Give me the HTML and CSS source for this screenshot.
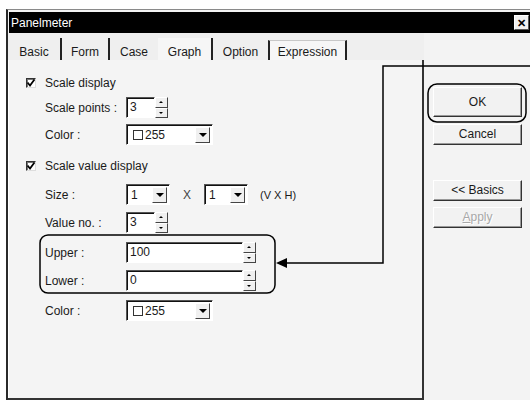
FILE: index.html
```html
<!DOCTYPE html>
<html lang="en">
<head>
  <meta charset="UTF-8" />
  <title>Panelmeter</title>
  <link rel="stylesheet" href="styles.css">
</head>
<body>
  <div class="page">
    <div class="window">
      <div class="titlebar">
        <span class="title">Panelmeter</span>
        <span class="close">&#x2715;</span>
      </div>

      <div class="client">
        <div class="main">
          <div class="tabs">
            <span class="tab t-basic sep">Basic</span>
            <span class="tab t-form sep">Form</span>
            <span class="tab t-case">Case</span>
            <span class="tab t-graph sep active">Graph</span>
            <span class="tab t-option">Option</span>
            <span class="tab t-expr boxed">Expression</span>
          </div>

          <div class="panel">
            <div class="row check r1">
              <span class="checkbox"><svg width="8" height="8" viewBox="0 0 8 8"><polyline points="0.5,3.5 3,6.5 7.5,0.5" /></svg></span>
              <span>Scale display</span>
            </div>
            <div class="row r2">
              <span class="label">Scale points :</span>
              <span class="spin"><span class="field num">3</span><span class="spinbtns"><i class="up"></i><i class="down"></i></span></span>
            </div>
            <div class="row r3">
              <span class="label">Color :</span>
              <span class="combo color"><span class="swatch"></span>255<span class="drop"><i></i></span></span>
            </div>

            <div class="row check r4">
              <span class="checkbox"><svg width="8" height="8" viewBox="0 0 8 8"><polyline points="0.5,3.5 3,6.5 7.5,0.5" /></svg></span>
              <span>Scale value display</span>
            </div>
            <div class="row r5">
              <span class="label">Size :</span>
              <span class="combo small">1<span class="drop"><i></i></span></span>
              <span class="times">X</span>
              <span class="combo small">1<span class="drop"><i></i></span></span>
              <span class="hint">(V X H)</span>
            </div>
            <div class="row r6">
              <span class="label">Value no. :</span>
              <span class="spin"><span class="field num">3</span><span class="spinbtns"><i class="up"></i><i class="down"></i></span></span>
            </div>
            <div class="row r7">
              <span class="label">Upper :</span>
              <span class="spin"><span class="field wide">100</span><span class="spinbtns"><i class="up"></i><i class="down"></i></span></span>
            </div>
            <div class="row r8">
              <span class="label">Lower :</span>
              <span class="spin"><span class="field wide">0</span><span class="spinbtns"><i class="up"></i><i class="down"></i></span></span>
            </div>
            <div class="row r9">
              <span class="label">Color :</span>
              <span class="combo color"><span class="swatch"></span>255<span class="drop"><i></i></span></span>
            </div>
          </div>
        </div>

        <div class="side">
          <span class="btn ok">OK</span>
          <span class="btn cancel">Cancel</span>
          <span class="btn basics">&lt;&lt; Basics</span>
          <span class="btn apply"><u>A</u>pply</span>
        </div>
      </div>
    </div>

    <!-- annotation drawn over the dialog -->
    <svg class="notes" width="530" height="403" viewBox="0 0 530 403">
      <rect x="40" y="235" width="235" height="58" rx="8" />
      <rect x="428" y="84" width="98" height="38" rx="9" />
      <polyline points="530,66 383,66 383,263 284,263" />
      <polygon class="head" points="276,263 287,258 287,268" />
    </svg>
  </div>
</body>
</html>
```

FILE: styles.css
```css
* {
  box-sizing: border-box;
}

body {
  margin: 0;
  background: #fff;
  font-family: "Liberation Sans", Arial, sans-serif;
  font-size: 12px;
  color: #1a1a1a;
}

.page {
  position: relative;
  width: 530px;
  height: 403px;
  overflow: hidden;
}

.window {
  margin: 9px 0 0 6px;
  height: 391px;
  border-top: 1px solid #8a8a8a;
  border-left: 2px solid #2a2a2a;
  padding-top: 2px;
  background: #f3f3f3;
  display: flex;
  flex-direction: column;
}

.titlebar {
  height: 21px;
  margin-left: 1px;
  background: #000;
  color: #fff;
  display: flex;
  align-items: center;
  justify-content: space-between;
  padding: 0 1px 0 2px;
}

.close {
  width: 15px;
  height: 15px;
  background: #f0f0f0;
  color: #000;
  font-size: 11px;
  font-weight: bold;
  line-height: 14px;
  text-align: center;
  border: 1px solid;
  border-color: #fff #555 #555 #fff;
}

.client {
  flex: 1;
  display: flex;
}

.main {
  width: 416px;
  display: flex;
  flex-direction: column;
}

/* tab strip */
.tabs {
  height: 27px;
  display: flex;
  align-items: flex-end;
  background: #efefef;
}

.tab {
  height: 22px;
  padding-top: 6px;
  line-height: 16px;
  text-align: center;
}

.tab.sep {
  border-right: 2px solid #222;
}

.tab.active {
  background: #f6f6f6;
}

.t-basic { width: 54px; }
.t-form { width: 48px; }
.t-case { width: 48px; }
.t-graph { width: 55px; }
.t-option { width: 55px; }

.t-expr {
  width: 79px;
  height: 20px;
  padding-top: 3px;
  border-left: 2px solid #222;
  border-right: 2px solid #222;
  border-top: 1px solid #c8c8c8;
  background: #f6f6f6;
}

/* tab page */
.panel {
  flex: 1;
  background: #f4f4f4;
  border-right: 2px solid #333;
  border-bottom: 2px solid #333;
  box-shadow: inset 1px 0 #fff;
  padding-left: 18px;
  display: flex;
  flex-direction: column;
}

.row {
  display: flex;
  align-items: center;
  height: 21px;
  padding-left: 19px;
}

.row.check {
  height: 12px;
  padding-left: 0;
  gap: 9px;
}

.r1 { margin-top: 17px; }
.r2 { margin-top: 8px; }
.r3 { margin-top: 6px; }
.r4 { margin-top: 15px; }
.r5 { margin-top: 12px; }
.r6 { margin-top: 7px; }
.r7 { margin-top: 9px; }
.r8 { margin-top: 7px; }
.r9 { margin-top: 9px; }

.checkbox {
  width: 10px;
  height: 10px;
  background: #fff;
  border: 1px solid;
  border-color: #333 #ddd #ddd #333;
  box-shadow: inset 1px 1px #777;
  display: flex;
  align-items: center;
  justify-content: center;
}

.checkbox svg {
  fill: none;
  stroke: #000;
  stroke-width: 1.8;
}

.label {
  width: 81px;
}

.field {
  height: 21px;
  background: #fff;
  border: 1px solid;
  border-color: #555 #fff #fff #555;
  box-shadow: inset 1px 1px #111;
  padding-left: 3px;
  line-height: 19px;
}

.field.num { width: 29px; }
.field.wide { width: 117px; }

.spin {
  display: flex;
}

.spinbtns {
  width: 13px;
  height: 21px;
  display: flex;
  flex-direction: column;
}

.spinbtns i {
  flex: 1;
  position: relative;
  background: #f0f0f0;
  border: 1px solid;
  border-color: #fff #444 #444 #fff;
}

.spinbtns i::after {
  content: "";
  position: absolute;
  left: 3px;
  top: 3px;
  border-left: 2px solid transparent;
  border-right: 2px solid transparent;
}

.spinbtns .up::after { border-bottom: 2px solid #000; }
.spinbtns .down::after { border-top: 2px solid #000; }

.combo {
  height: 21px;
  background: #fff;
  border: 1px solid;
  border-color: #555 #fff #fff #555;
  box-shadow: inset 1px 1px #111;
  display: flex;
  align-items: center;
  padding-left: 4px;
  position: relative;
}

.combo.color { width: 87px; }
.combo.small { width: 44px; }

.swatch {
  width: 10px;
  height: 10px;
  border: 1px solid #333;
  background: #fff;
  margin: 0 2px 0 2px;
}

.drop {
  position: absolute;
  right: 2px;
  top: 2px;
  width: 15px;
  height: 16px;
  background: #f0f0f0;
  border: 1px solid;
  border-color: #fff #444 #444 #fff;
}

.drop i {
  position: absolute;
  left: 3px;
  top: 5px;
  border-left: 4px solid transparent;
  border-right: 4px solid transparent;
  border-top: 4px solid #000;
}

.times {
  width: 34px;
  text-align: center;
  color: #444;
}

.hint {
  margin-left: 12px;
  font-size: 11px;
}

/* button column */
.side {
  flex: 1;
  padding: 54px 0 0 9px;
  display: flex;
  flex-direction: column;
  align-items: flex-start;
}

.btn {
  width: 89px;
  height: 21px;
  line-height: 19px;
  text-align: center;
  background: #f2f2f2;
  border: 1px solid;
  border-color: #fff #333 #333 #fff;
  box-shadow: inset -1px -1px #999;
}

.btn.ok {
  height: 30px;
  line-height: 28px;
}

.btn.cancel { margin-top: 7px; }
.btn.basics { margin-top: 35px; }
.btn.apply {
  margin-top: 6px;
  color: #a8a8a8;
  text-shadow: 1px 1px #fff;
}

.notes {
  position: absolute;
  left: 0;
  top: 0;
  pointer-events: none;
  fill: none;
  stroke: #000;
  stroke-width: 1.5;
}

.notes .head {
  fill: #000;
  stroke: none;
}
```
